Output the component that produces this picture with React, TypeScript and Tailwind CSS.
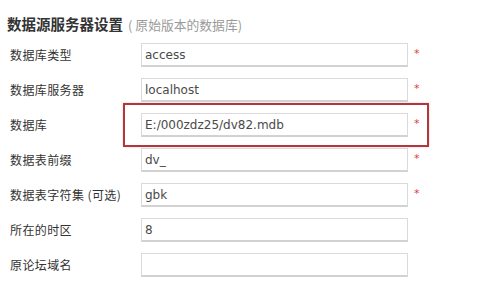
import React from "react";

const rows: { label: string; value: string; req: boolean }[] = [
  { label: "数据库类型", value: "access", req: true },
  { label: "数据库服务器", value: "localhost", req: true },
  { label: "数据库", value: "E:/000zdz25/dv82.mdb", req: true },
  { label: "数据表前缀", value: "dv_", req: true },
  { label: "数据表字符集 (可选)", value: "gbk", req: true },
  { label: "所在的时区", value: "8", req: false },
  { label: "原论坛域名", value: "", req: false },
];

export default function App() {
  return (
    <div className="relative w-[477px] h-[294px] bg-white overflow-hidden">
      <div className="pl-[7px] pt-[14px] flex items-baseline leading-[20px]">
        <span
          className="text-[14.5px] font-bold text-[#333]"
          style={{ fontFamily: '"Noto Sans CJK SC", sans-serif' }}
        >
          数据源服务器设置
        </span>
        <span
          className="text-[12.8px] text-[#9a9a9a] ml-[5px]"
          style={{ fontFamily: '"Noto Sans CJK SC", sans-serif' }}
        >
          (<span className="ml-[3px]">原始版本的数据库</span>)
        </span>
      </div>
      <div className="mt-[8px] pl-[10px] flex flex-col gap-[11px]">
        {rows.map((r) => (
          <div key={r.label} className="flex items-center h-[24px]">
            <div
              className="w-[131px] text-[12px] tracking-[0.4px] text-[#333]"
              style={{ fontFamily: '"Noto Sans CJK SC", sans-serif' }}
            >
              {r.label}
            </div>
            <div
              className="w-[267px] h-[24px] border border-[#dadada] border-b-2 border-b-[#d2d2d2] pl-[3px] flex items-center text-[12px] text-[#4a4a4a]"
              style={{ fontFamily: '"DejaVu Sans", Verdana, sans-serif' }}
            >
              {r.value}
            </div>
            {r.req && (
              <span
                className="ml-[6px] text-[11px] text-[#e03a3a] self-start mt-[3px]"
                style={{ fontFamily: '"DejaVu Sans", sans-serif' }}
              >
                *
              </span>
            )}
          </div>
        ))}
      </div>
      <div className="absolute left-[123px] top-[103px] w-[306px] h-[44px] border-2 border-[#b0383c] shadow-[0_0_2px_#f3c4c4]" />
    </div>
  );
}
